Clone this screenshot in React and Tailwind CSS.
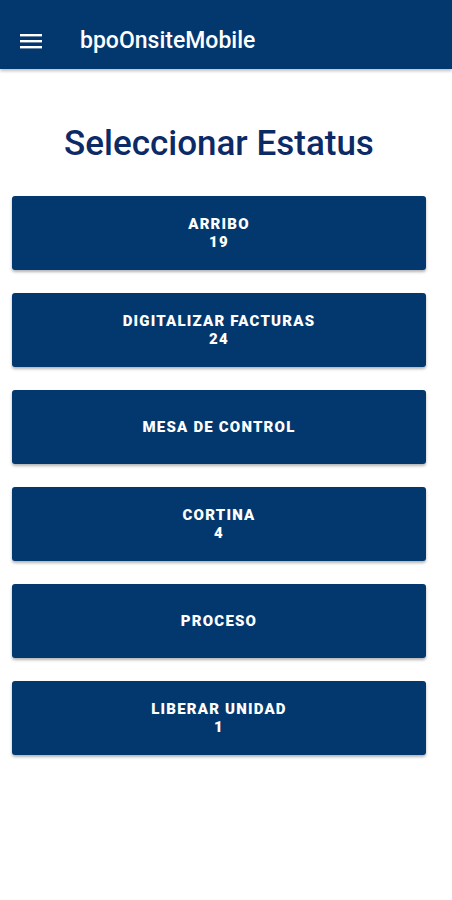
import React from "react";

const items = [
  { label: "ARRIBO", count: "19" },
  { label: "DIGITALIZAR FACTURAS", count: "24" },
  { label: "MESA DE CONTROL" },
  { label: "CORTINA", count: "4" },
  { label: "PROCESO" },
  { label: "LIBERAR UNIDAD", count: "1" },
];

export default function App() {
  return (
    <div className="w-[452px] h-[900px] bg-white" style={{ fontFamily: "Roboto, 'Liberation Sans', sans-serif" }}>
      <header className="h-[69px] pt-[13px] bg-[#03386e] flex items-center shadow-[0_2px_3px_rgba(0,0,0,0.25)]">
        <div className="w-[80px] flex pl-[20px]">
          <svg width="22" height="16" viewBox="0 0 22 16">
            <rect x="0" y="1" width="22" height="2.4" fill="white" />
            <rect x="0" y="7" width="22" height="2.4" fill="white" />
            <rect x="0" y="13" width="22" height="2.4" fill="white" />
          </svg>
        </div>
        <span className="text-white text-[23px] font-medium">bpoOnsiteMobile</span>
      </header>
      <div className="w-[438px]">
        <h1 className="text-center text-[#0b2a66] text-[35px] font-medium mt-[55px] leading-[40px]">Seleccionar Estatus</h1>
        <div className="flex flex-col gap-[23px] px-[12px] mt-[32px]">
          {items.map((it) => (
            <div
              key={it.label}
              className="h-[74px] bg-[#03386e] rounded-[3px] shadow-[0_2px_3px_rgba(0,0,0,0.3)] flex flex-col items-center justify-center text-white font-black text-[15px] tracking-[1.2px] leading-[18px]"
            >
              <span>{it.label}</span>
              {it.count && <span>{it.count}</span>}
            </div>
          ))}
        </div>
      </div>
    </div>
  );
}
